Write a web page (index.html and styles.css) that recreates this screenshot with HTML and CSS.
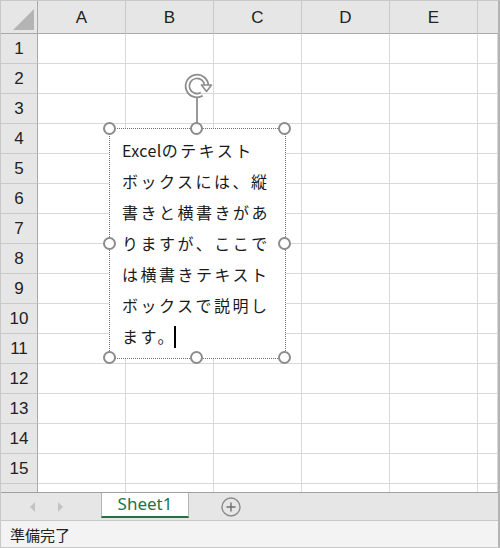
FILE: index.html
```html
<!DOCTYPE html>
<html lang="ja">
<head>
<meta charset="utf-8">
<title>Excel</title>
<link rel="stylesheet" href="styles.css">
</head>
<body>
<div class="app">
  <div class="sheet">
    <div class="hc corner"></div><div class="hc">A</div><div class="hc">B</div><div class="hc">C</div><div class="hc">D</div><div class="hc">E</div><div class="hc last"></div>
    <div class="rh">1</div><div class="c"></div><div class="c"></div><div class="c"></div><div class="c"></div><div class="c"></div><div class="c"></div>
    <div class="rh">2</div><div class="c"></div><div class="c"></div><div class="c"></div><div class="c"></div><div class="c"></div><div class="c"></div>
    <div class="rh">3</div><div class="c"></div><div class="c"></div><div class="c"></div><div class="c"></div><div class="c"></div><div class="c"></div>
    <div class="rh">4</div><div class="c"></div><div class="c"></div><div class="c"></div><div class="c"></div><div class="c"></div><div class="c"></div>
    <div class="rh">5</div><div class="c"></div><div class="c"></div><div class="c"></div><div class="c"></div><div class="c"></div><div class="c"></div>
    <div class="rh">6</div><div class="c"></div><div class="c"></div><div class="c"></div><div class="c"></div><div class="c"></div><div class="c"></div>
    <div class="rh">7</div><div class="c"></div><div class="c"></div><div class="c"></div><div class="c"></div><div class="c"></div><div class="c"></div>
    <div class="rh">8</div><div class="c"></div><div class="c"></div><div class="c"></div><div class="c"></div><div class="c"></div><div class="c"></div>
    <div class="rh">9</div><div class="c"></div><div class="c"></div><div class="c"></div><div class="c"></div><div class="c"></div><div class="c"></div>
    <div class="rh">10</div><div class="c"></div><div class="c"></div><div class="c"></div><div class="c"></div><div class="c"></div><div class="c"></div>
    <div class="rh">11</div><div class="c"></div><div class="c"></div><div class="c"></div><div class="c"></div><div class="c"></div><div class="c"></div>
    <div class="rh">12</div><div class="c"></div><div class="c"></div><div class="c"></div><div class="c"></div><div class="c"></div><div class="c"></div>
    <div class="rh">13</div><div class="c"></div><div class="c"></div><div class="c"></div><div class="c"></div><div class="c"></div><div class="c"></div>
    <div class="rh">14</div><div class="c"></div><div class="c"></div><div class="c"></div><div class="c"></div><div class="c"></div><div class="c"></div>
    <div class="rh">15</div><div class="c"></div><div class="c"></div><div class="c"></div><div class="c"></div><div class="c"></div><div class="c"></div>
    <div class="rh">16</div><div class="c"></div><div class="c"></div><div class="c"></div><div class="c"></div><div class="c"></div><div class="c"></div>
  </div>

  <div class="tabbar">
    <div class="navs">
      <span class="nav prev"></span>
      <span class="nav next"></span>
    </div>
    <div class="tab">Sheet1</div>
    <div class="add">
      <svg width="22" height="22" viewBox="0 0 22 22"><circle cx="11" cy="11" r="9" fill="none" stroke="#8a8a8a" stroke-width="1.4"/><path d="M11 6.5v9M6.5 11h9" stroke="#6e6e6e" stroke-width="1.4"/></svg>
    </div>
  </div>

  <div class="status">準備完了</div>

  <svg class="rotate" width="32" height="28" viewBox="0 0 32 28">
    <path d="M20.75 22.23 A9.5 9.5 0 1 1 25.5 14" fill="none" stroke="#8c8c8c" stroke-width="5.5"/>
    <path d="M20.75 22.23 A9.5 9.5 0 1 1 25.5 14" fill="none" stroke="#ffffff" stroke-width="2"/>
    <polygon points="20.5,13 30.5,13 25.5,19.5" fill="#ffffff" stroke="#8c8c8c" stroke-width="1.6" stroke-linejoin="round"/>
  </svg>
  <div class="rotline"></div>

  <div class="textbox">
    <div class="tbtext"><span class="lat">Excel</span>のテキスト<br>ボックスには、縦<br>書きと横書きがあ<br>りますが、ここで<br>は横書きテキスト<br>ボックスで説明し<br>ます。<span class="caret"></span></div>
  </div>
  <span class="handle h1"></span>
  <span class="handle h2"></span>
  <span class="handle h3"></span>
  <span class="handle h4"></span>
  <span class="handle h5"></span>
  <span class="handle h6"></span>
  <span class="handle h7"></span>
  <span class="handle h8"></span>
</div>
</body>
</html>
```

FILE: styles.css
```css
* { box-sizing: border-box; }
html, body { margin: 0; padding: 0; background: #ffffff; }

.app {
  position: relative;
  width: 500px;
  height: 548px;
  border: 1px solid #c8c8c8;
  border-right: 2px solid #b4b4b4;
  display: flex;
  flex-direction: column;
  overflow: hidden;
  font-family: "Liberation Sans", Arial, sans-serif;
}

.sheet {
  height: 491px;
  flex: none;
  display: grid;
  grid-template-columns: 37px repeat(5, 88px) 1fr;
  grid-template-rows: 33px repeat(16, 30px);
  overflow: hidden;
}

.hc {
  background: #e6e6e6;
  border-right: 1px solid #cacaca;
  border-bottom: 1px solid #a9a9a9;
  display: flex;
  align-items: center;
  justify-content: center;
  font-size: 17px;
  color: #222222;
  padding-top: 2px;
}
.hc.last { border-right: none; }
.corner {
  position: relative;
  border-right: 1px solid #a9a9a9;
}
.corner::after {
  content: "";
  position: absolute;
  right: 3px;
  bottom: 3px;
  width: 21px;
  height: 21px;
  background: #b4b4b4;
  clip-path: polygon(100% 0, 100% 100%, 0 100%);
}

.rh {
  background: #e6e6e6;
  border-right: 1px solid #a9a9a9;
  border-bottom: 1px solid #cacaca;
  display: flex;
  align-items: center;
  justify-content: center;
  font-size: 17px;
  color: #222222;
  padding-top: 1px;
}

.c {
  border-right: 1px solid #d9d9d9;
  border-bottom: 1px solid #d9d9d9;
  background: #ffffff;
}

.tabbar {
  height: 28px;
  flex: none;
  background: #e6e6e6;
  border-top: 1px solid #a0a0a0;
  display: flex;
  align-items: stretch;
}
.navs {
  width: 100px;
  display: flex;
  align-items: center;
  padding-left: 29px;
  gap: 23px;
}
.nav {
  width: 0;
  height: 0;
  border-top: 5px solid transparent;
  border-bottom: 5px solid transparent;
}
.nav.prev { border-right: 5px solid #c3c3c3; }
.nav.next { border-left: 5px solid #c3c3c3; }

.tab {
  width: 88px;
  height: 25px;
  background: #ffffff;
  border-left: 1px solid #b4b4b4;
  border-right: 1px solid #b4b4b4;
  border-bottom: 2px solid #217346;
  color: #217346;
  font-family: "Noto Sans", "Liberation Sans", sans-serif;
  font-size: 17px;
  display: flex;
  align-items: center;
  justify-content: center;
  padding-bottom: 2px;
}
.add {
  width: 84px;
  display: flex;
  align-items: center;
  justify-content: center;
  padding-top: 1px;
}

.status {
  height: 27px;
  flex: none;
  background: #f3f3f3;
  border-top: 1px solid #c8c8c8;
  font-family: "Noto Sans CJK JP", sans-serif;
  font-size: 15px;
  color: #222222;
  padding-left: 9px;
  display: flex;
  align-items: center;
}

.rotate {
  position: absolute;
  left: 180px;
  top: 71px;
}
.rotline {
  position: absolute;
  left: 195px;
  top: 97px;
  width: 2px;
  height: 26px;
  background: #9a9a9a;
}

.textbox {
  position: absolute;
  left: 108px;
  top: 127px;
  width: 177px;
  height: 231px;
  border: 1px dotted #707070;
  background: #ffffff;
  padding: 6px 0 0 12px;
}
.tbtext {
  font-family: "Noto Sans CJK JP", sans-serif;
  font-size: 16px;
  line-height: 31px;
  letter-spacing: 2.5px;
  color: #1a1a1a;
  white-space: nowrap;
}
.lat { letter-spacing: 0.4px; }
.caret {
  display: inline-block;
  width: 2px;
  height: 22px;
  background: #000000;
  vertical-align: -5px;
  margin-left: -2px;
}

.handle {
  position: absolute;
  width: 13px;
  height: 13px;
  border-radius: 50%;
  border: 2px solid #8c8c8c;
  background: #ffffff;
}
.h1 { left: 102px; top: 121px; }
.h2 { left: 189px; top: 121px; }
.h3 { left: 277px; top: 121px; }
.h4 { left: 102px; top: 236px; }
.h5 { left: 277px; top: 236px; }
.h6 { left: 102px; top: 350px; }
.h7 { left: 189px; top: 350px; }
.h8 { left: 277px; top: 350px; }
```
